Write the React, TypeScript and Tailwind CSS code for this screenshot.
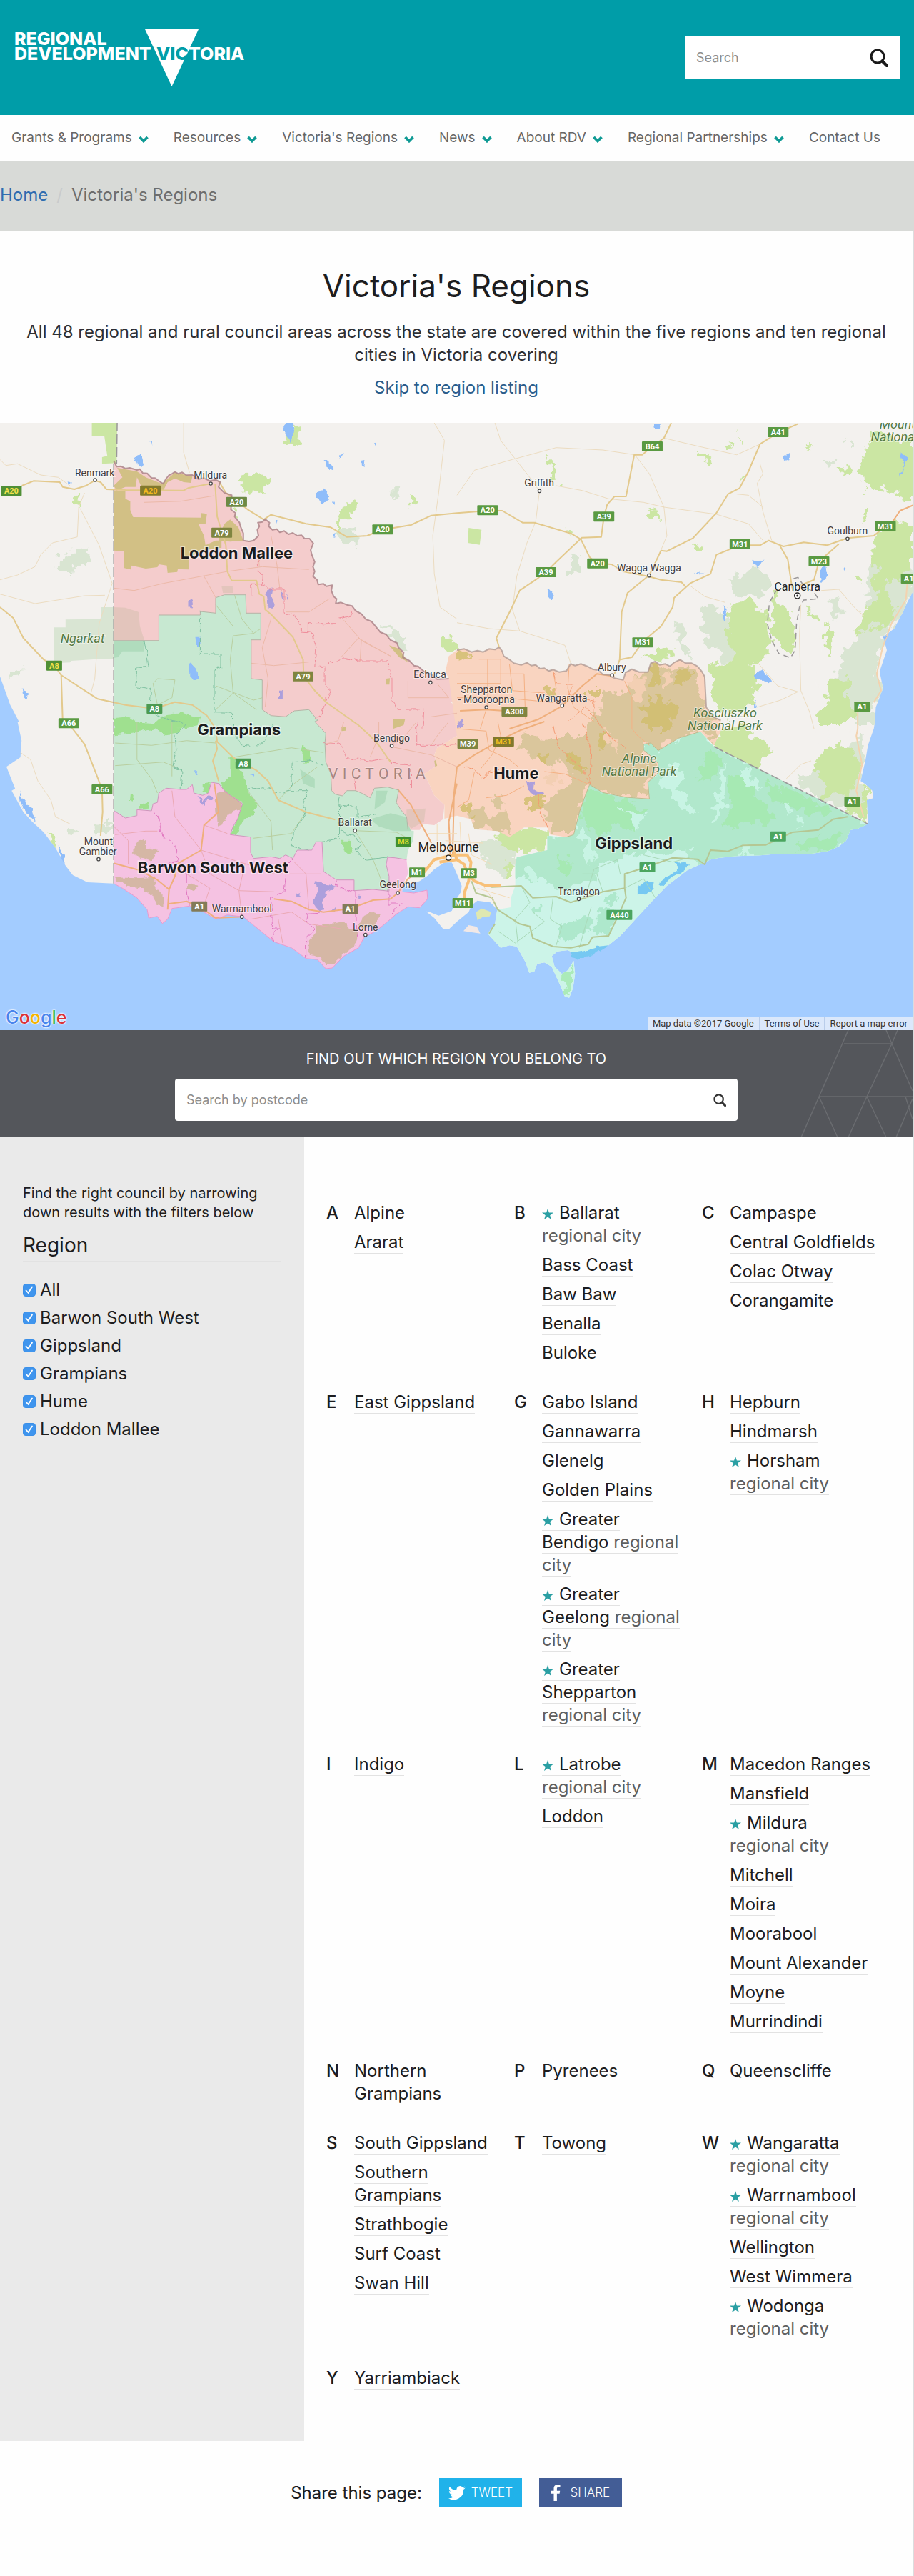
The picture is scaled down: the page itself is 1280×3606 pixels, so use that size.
import { Fragment } from "react";

/* ---------- Shared data ---------- */

const NAV = [
  { label: "Grants & Programs", menu: true },
  { label: "Resources", menu: true },
  { label: "Victoria's Regions", menu: true },
  { label: "News", menu: true },
  { label: "About RDV", menu: true },
  { label: "Regional Partnerships", menu: true },
  { label: "Contact Us", menu: false },
];

const FILTERS = ["All", "Barwon South West", "Gippsland", "Grampians", "Hume", "Loddon Mallee"];

type Council = string | { city: string };

const COUNCILS: { letter: string; items: Council[] }[] = [
  { letter: "A", items: ["Alpine", "Ararat"] },
  { letter: "B", items: [{ city: "Ballarat" }, "Bass Coast", "Baw Baw", "Benalla", "Buloke"] },
  { letter: "C", items: ["Campaspe", "Central Goldfields", "Colac Otway", "Corangamite"] },
  { letter: "E", items: ["East Gippsland"] },
  {
    letter: "G",
    items: [
      "Gabo Island",
      "Gannawarra",
      "Glenelg",
      "Golden Plains",
      { city: "Greater Bendigo" },
      { city: "Greater Geelong" },
      { city: "Greater Shepparton" },
    ],
  },
  { letter: "H", items: ["Hepburn", "Hindmarsh", { city: "Horsham" }] },
  { letter: "I", items: ["Indigo"] },
  { letter: "L", items: [{ city: "Latrobe" }, "Loddon"] },
  {
    letter: "M",
    items: [
      "Macedon Ranges",
      "Mansfield",
      { city: "Mildura" },
      "Mitchell",
      "Moira",
      "Moorabool",
      "Mount Alexander",
      "Moyne",
      "Murrindindi",
    ],
  },
  { letter: "N", items: ["Northern Grampians"] },
  { letter: "P", items: ["Pyrenees"] },
  { letter: "Q", items: ["Queenscliffe"] },
  { letter: "S", items: ["South Gippsland", "Southern Grampians", "Strathbogie", "Surf Coast", "Swan Hill"] },
  { letter: "T", items: ["Towong"] },
  {
    letter: "W",
    items: [{ city: "Wangaratta" }, { city: "Warrnambool" }, "Wellington", "West Wimmera", { city: "Wodonga" }],
  },
  { letter: "Y", items: ["Yarriambiack"] },
];

/* ---------- Icons ---------- */

function Magnifier({ className }: { className: string }) {
  return (
    <svg viewBox="0 0 26 26" className={className} fill="none" stroke="currentColor" aria-hidden="true">
      <circle cx="11" cy="11" r="9" strokeWidth="3.2" />
      <path d="M17.5 17.5 24 24" strokeWidth="4.4" strokeLinecap="round" />
    </svg>
  );
}

function Chevron() {
  return (
    <svg viewBox="0 0 14 10" className="mt-1 h-2.5 w-3.5 text-[#0f9a94]" fill="none" stroke="currentColor" aria-hidden="true">
      <path d="M1.5 2 7 7.5 12.500 2" strokeWidth="3.8" />
    </svg>
  );
}

function Star() {
  return (
    <svg viewBox="0 0 16 15" className="mr-2 inline-block h-[15px] w-4 align-[-1px] text-[#2a9fa3]" aria-hidden="true">
      <path
        fill="currentColor"
        d="M8 0 9.900 5.500 16 5.600 11.200 9.200 12.900 15 8 11.600 3.100 15 4.800 9.200 0 5.600 6.100 5.500Z"
      />
    </svg>
  );
}

function Logo() {
  return (
    <svg viewBox="0 0 340 84" className="h-[84px] w-[340px]" role="img" aria-label="Regional Development Victoria">
      <path d="M183 2H258L220.500 82Z" fill="#fff" />
      <g className="font-[Inter] text-[25px] font-extrabold" fill="#fff">
        <text x="0" y="24">REGIONAL</text>
        <text x="0" y="45">DEVELOPMENT</text>
        <text x="199" y="45">
          <tspan fill="#009da8">VIC</tspan>
          <tspan>TORIA</tspan>
        </text>
      </g>
    </svg>
  );
}

/* ---------- Map ---------- */

/* The map is traced in four tiles: [column, row, "x,y x,y ..."], in tile units. */
type Seg = [number, number, string];

const px = (col: number, x: number) => (x + col * 1568) / 2.45;
const py = (row: number, y: number) => (y + row * 1260) / 3 - 2;

function line(...segs: Seg[]) {
  const pts = segs.flatMap(([c, r, s]) =>
    s.split(" ").map((p) => {
      const [x, y] = p.split(",").map(Number);
      return `${px(c, x).toFixed(1)} ${py(r, y).toFixed(1)}`;
    }),
  );
  return "M" + pts.join("L");
}
const area = (...segs: Seg[]) => line(...segs) + "Z";

const rev = ([c, r, s]: Seg): Seg => [c, r, s.split(" ").reverse().join(" ")];

const eastCoast: Seg[] = [
  [1, 0, "1568,705 1545,760 1530,800 1500,870 1462,905 1475,960 1450,1050 1462,1120 1437,1200 1434,1260"],
  [1, 1, "1430,30 1410,100 1402,160 1385,250 1400,262 1425,290 1428,322 1406,330 1410,430"],
];
const gippsCoast: Seg = [
  1,
  1,
  "1410,430 1375,450 1350,455 1335,500 1310,525 1270,545 1200,558 1100,556 1040,562 960,565 900,572 870,580 790,625 720,690 680,740 620,820 560,900 520,940 440,965 405,975 380,960 345,965 325,985 335,1030 360,1060 380,1045 400,1005 405,1060 398,1120 385,1160 370,1155 355,1110 340,1070 325,1030 300,1012 275,1018 265,1050 248,1055 235,1010 205,945 180,940 150,950 105,890",
];
const westernPort: Seg = [1, 1, "105,890 130,850 138,790 115,760 70,752 50,772 40,800 0,840"];
const bay: Seg[] = [
  [0, 1, "1540,872 1520,870 1490,825 1462,797 1475,800 1505,815 1550,795"],
  [1, 1, "0,742 14,715 16,690 5,655"],
  [0, 1, "1550,592 1525,592 1490,620 1470,645 1440,670 1400,690 1380,700"],
];
const surfCoast: Seg = [
  0,
  1,
  "1380,715 1420,720 1465,708 1467,745 1440,782 1400,778 1360,808 1330,840 1290,880 1250,905 1230,950 1180,985 1140,1035 1118,1038 1090,1000 1050,995 1000,950 940,925 870,855 835,820 780,812 740,830 700,800 650,775 590,785 575,830 557,848 540,818 510,825 505,790 470,740 420,700 390,680",
];
const saCoast: Seg[] = [
  [0, 1, "390,680 300,675 250,645 225,605 190,530 150,465 110,420 80,380 40,290 52,282 22,190 70,150 74,80 60,0"],
  [0, 0, "65,1260 35,1190 0,1070"],
];

const murray: Seg = [
  0,
  0,
  "390,165 400,190 415,188 430,198 445,195 470,204 480,200 490,217 505,218 520,237 532,238 545,250 560,262 570,240 580,225 590,220 600,212 612,220 625,214 640,226 660,225 680,242 700,238 720,250 740,245 755,255 750,275 770,300 795,310 795,335 792,370 808,385 805,400 822,425 825,440 835,470 835,500 855,504 870,500 887,480 883,455 890,440 885,425 900,422 910,410 925,425 922,440 935,455 950,452 960,466 975,460 990,474 1005,468 1020,480 1035,478 1045,492 1062,492 1075,512 1066,540 1070,560 1080,590 1074,610 1080,630 1074,650 1088,665 1092,685 1110,682 1120,692 1140,688 1137,710 1145,735 1155,745 1152,765 1170,760 1190,770 1208,775 1220,795 1240,808 1255,830 1275,840 1290,862 1305,885 1325,895 1340,918 1362,930 1368,950 1385,970 1382,990 1405,1005 1420,1025 1435,1028 1455,1050 1480,1062 1500,1082 1540,1080",
];
const loddonHume: Seg[] = [
  [1, 0, "30,1100 30,1150 -20,1180 25,1230"],
  [0, 1, "1568,60 1500,110 1490,140 1500,185 1455,220 1470,255"],
];
const loddonSouth: Seg[] = [[0, 1, "1490,310 1525,350 1520,410 1490,435 1450,430 1440,455 1400,455"]];
const loddonGrampians: Seg[] = [
  [
    0,
    1,
    "1400,455 1395,400 1375,370 1360,340 1368,288 1330,275 1285,280 1270,320 1240,300 1220,290 1190,290 1175,312 1150,305 1138,290 1135,220 1118,170 1115,90 1118,50 1080,0",
  ],
  [
    0,
    0,
    "1090,1255 1060,1210 1010,1215 980,1240 930,1235 900,1210 900,1085 862,1080 862,917 895,917 895,805 845,805 843,728 770,728 740,740 740,805 687,798 687,813 545,813 545,920 390,920",
  ],
];
const grampiansBarwon: Seg = [
  0,
  1,
  "1395,580 1355,572 1330,570 1325,600 1335,650 1335,712 1280,705 1215,710 1215,665 1155,665 1110,630 1105,505 1085,505 1070,540 1020,540 1005,575 980,560 960,575 930,568 870,575 860,550 860,485 790,475 800,440 815,410 832,345 790,310 770,290 750,260 725,255 715,300 695,310 665,300 660,265 640,285 620,285 570,280 545,300 540,340 525,345 520,375 470,370 470,395 430,405 392,375",
];
const humeNorth: Seg = [
  1,
  0,
  "0,960 25,955 50,968 70,962 90,968 110,955 130,958 145,948 155,965 160,985 180,1000 195,1015 220,1022 240,1013 255,1025 270,1022 285,1038 300,1036 315,1048 330,1042 350,1052 375,1048 390,1018 405,1025 425,1018 450,1030 465,1040 485,1045 500,1062 525,1065 540,1078 570,1085 578,1055 600,1040 625,1052 655,1052 665,1015 680,1008 695,1022 715,1018 730,1028 745,1012 765,1000 785,1015 805,1015 825,1028 840,1050 850,1072 855,1200 880,1240 905,1255",
];
const humeGipps: Seg = [
  1,
  1,
  "835,42 760,70 690,122 665,90 640,95 640,120 665,145 690,175 690,215 655,255 660,325 580,318 500,298 455,265 440,310 420,380 400,475 375,485",
];
const humeSouth: Seg[] = [
  [1, 1, "375,485 320,475 310,445 230,445 180,485 140,460 60,452 48,410 0,395"],
  [0, 1, "1550,400 1525,408 1525,350 1490,310"],
];

const LAND = area([0, 0, "0,0 3136,0"], ...eastCoast, gippsCoast, westernPort, ...bay, surfCoast, ...saCoast);
const LODDON = area(murray, ...loddonHume, ...loddonSouth, ...loddonGrampians);
const GRAMPIANS = area(
  ...loddonGrampians,
  rev(grampiansBarwon),
  [0, 1, "1395,580 1400,540 1418,500 1420,460"],
);
const BARWON = area(rev(grampiansBarwon), [0, 1, "1395,580 1400,640 1380,690"], surfCoast);
const HUME = area(
  [0, 0, "1540,1080 1528,1050 1540,985 1568,960"],
  humeNorth,
  [1, 1, "905,40 882,100"],
  humeGipps,
  ...humeSouth,
  [0, 1, "1470,255 1455,220 1500,185 1490,140 1500,110 1568,60"],
);
const GIPPSLAND = area(
  humeGipps,
  [1, 1, "310,480 310,540 205,570 200,600 200,690 185,740 185,780 138,790 130,850 105,890"],
  rev(gippsCoast),
  [1, 1, "882,105"],
);

const PARKS_DARK = [
  area([0, 0, "198,568 240,565 242,545 300,545 300,600 250,602 245,645 212,645 198,620"]),
  area([0, 0, "1155,470 1190,450 1222,452 1225,528 1180,510"]),
  area([0, 0, "1340,280 1370,280 1368,322 1338,320"]),
  area([0, 0, "22,1050 70,1040 68,1072 26,1076"]),
  area([0, 0, "1315,835 1340,870 1385,905 1388,960 1370,950 1330,900"]),
  area([0, 1, "230,440 270,465 260,480 235,470"]),
  area([0, 1, "335,440 378,420 375,470 335,475"]),
  area([1, 0, "740,870 770,850 790,880 775,930 800,990 770,960 755,905"]),
  area([1, 0, "835,850 850,775 895,768 905,800 930,830 940,900 950,1000 910,1010 890,960 860,930"]),
  area([1, 0, "940,650 990,640 1010,600 1060,640 1080,670 1050,740 1000,730 960,740"]),
  area([1, 0, "1420,130 1480,200 1500,280 1568,330 1568,130 1500,180"]),
  area([1, 0, "1430,560 1500,560 1560,590 1568,700 1510,850 1460,900 1440,1060 1450,1130 1430,1260 1270,1260 1290,1150 1310,1040 1330,960 1370,940 1400,790"]),
  area([1, 0, "1280,760 1310,740 1320,800 1290,830"]),
  area([1, 0, "395,565 420,565 408,645 388,640"]),
  area([1, 0, "1260,160 1290,150 1300,180 1270,185"]),
  area([1, 0, "1340,80 1360,90 1350,115"]),
  area([1, 1, "1170,240 1300,140 1390,60 1395,240 1410,400 1240,330"]),
  area([1, 1, "70,520 120,480 185,520 200,580 195,655 140,640 100,600"]),
];

const NGARKAT = area([0, 0, "186,865 225,865 225,832 345,830 348,780 390,780 390,965 415,968 400,995 330,998 245,1005 240,1012 186,1015"]);

const PARKS_LIGHT = [
  area([0, 0, "980,6 1040,25 1035,85 1010,118 975,110 975,80 1000,60"]),
  area([0, 0, "808,245 840,218 880,220 920,245 918,300 870,292 835,302 832,270"]),
  area([0, 0, "255,335 270,308 282,345 270,365"]),
  area([0, 0, "1160,405 1200,335 1235,345 1210,370 1200,400 1170,420 1175,460 1158,470"]),
  area([0, 0, "1405,312 1425,318 1420,358 1403,350"]),
  area([0, 0, "1525,895 1568,935 1568,955 1540,985 1520,950"]),
  area([0, 0, "800,360 822,400 805,395"]),
  area([0, 1, "150,465 180,480 205,530 190,530"]),
  area([1, 0, "316,155 330,165 335,215 355,258 340,262 322,225"]),
  area([1, 0, "832,122 870,165 860,175 838,160"]),
  area([1, 0, "975,40 972,95 967,85"]),
  area([1, 0, "662,390 676,360 680,385 686,402 664,402"]),
  area([1, 0, "812,510 830,503 828,532 812,530"]),
  area([1, 0, "376,445 405,470 400,480 382,468"]),
  area([1, 0, "986,232 1000,240 985,262 978,250"]),
  area([1, 0, "935,95 952,88 948,118 935,112"]),
  area([1, 0, "1185,105 1200,95 1200,120"]),
  area([1, 0, "1308,205 1340,185 1356,210 1330,242"]),
  area([1, 0, "1425,40 1420,80 1390,160 1375,200 1395,250 1385,310 1430,270 1470,290 1568,330 1568,60 1500,80 1450,40"]),
  area([1, 0, "1385,370 1410,365 1400,410 1380,425"]),
  area([1, 0, "1440,470 1510,420 1568,440 1568,590 1520,690 1480,650 1450,740 1430,700 1440,600 1412,580 1430,540"]),
  area([1, 0, "1395,790 1470,700 1510,780 1490,860 1420,860 1370,910"]),
  area([1, 0, "635,985 670,965 735,952 745,985 700,1000 650,1000"]),
  area([1, 0, "930,770 990,750 1060,790 1070,900 1070,980 1020,1010 1030,1100 1010,1200 940,1240 870,1180 880,1080 870,1030 950,1000 935,900"]),
  area([1, 0, "1080,730 1100,720 1130,790 1150,840 1165,900 1150,980 1110,970 1075,870"]),
  area([1, 0, "1200,770 1220,800 1250,830 1225,850 1205,830"]),
  area([1, 0, "1198,860 1235,880 1220,925 1195,910"]),
  area([1, 0, "1365,655 1390,660 1385,680 1365,675"]),
  area([1, 0, "1290,1090 1340,1080 1340,1180 1370,1260 1240,1260 1270,1140"]),
  area([1, 0, "1270,840 1290,900 1285,1000 1265,960"]),
  area([1, 1, "905,40 980,10 1020,70 1080,110 1050,160 1040,205 890,120 885,80"]),
  area([1, 1, "1220,200 1250,120 1300,90 1370,130 1390,200 1340,300 1260,320 1250,240"]),
  area([1, 1, "1400,280 1418,300 1405,410 1330,375 1390,330"]),
  area([1, 1, "140,465 230,450 310,448 310,545 240,545 150,530"]),
  area([1, 1, "180,590 200,600 195,655 165,650"]),
];
const SQUARE_PARKS = [
  area([0, 0, "315,6 402,6 400,175 350,178 350,150 368,145 358,62 315,62"]),
  area([1, 0, "40,447 84,455 78,518 37,510"]),
];

const HOLES = [
  area([1, 0, "1060,1040 1130,1010 1170,900 1190,760 1240,860 1255,960 1230,1080 1250,1170 1225,1260 1060,1260 1040,1150"]),
  area([1, 1, "1075,0 1225,0 1250,60 1255,130 1215,150 1225,230 1160,240 1090,190 1050,160 1080,110"]),
  area([1, 1, "1270,50 1310,30 1370,40 1350,100 1305,110"]),
  area([1, 0, "1390,240 1440,290 1480,320 1440,370 1400,330"]),
];

const MALLEE_PARKS = [
  area([0, 0, "390,290 430,292 430,325 447,335 447,372 457,402 690,404 690,385 710,388 705,430 680,430 700,480 705,520 740,500 760,500 760,530 700,540 648,570 648,622 610,620 608,632 575,636 572,605 545,600 540,612 500,618 450,605 448,622 424,615 424,545 390,542"]),
  area([0, 0, "402,195 470,210 500,235 555,262 600,215 660,232 655,258 630,255 600,240 575,255 560,290 490,290 480,260 470,235 465,275 430,275 400,290 390,270 420,235"]),
  area([0, 0, "770,430 790,412 818,445 835,500 790,505 750,500 755,470"]),
  area([0, 0, "1335,940 1370,955 1400,1010 1370,990"]),
  area([0, 0, "1350,1250 1390,1250 1385,1275 1350,1290"]),
  area([0, 0, "1325,1080 1338,1078 1336,1105 1325,1105"]),
  area([0, 1, "1490,165 1520,145 1568,140 1568,200 1530,218 1495,205"]),
  area([0, 1, "1170,25 1188,20 1186,38 1172,40"]),
];

const HIGH_COUNTRY = [
  area([1, 0, "670,1020 720,1040 800,1030 825,1080 845,1200 890,1250"], [1, 1, "880,90 835,42 760,70 690,120 650,90 640,125 685,190 650,255 652,318 500,292 452,270 400,465 330,465 310,420 290,350 330,300 400,250 370,190 340,120 280,100 330,60 440,60 450,0"], [1, 0, "500,1200 500,1120 560,1150 600,1090 640,1060"]),
  area([1, 1, "45,350 90,370 110,400 170,390 190,445 180,475 60,445 45,410"]),
  area([1, 1, "120,300 160,320 150,370 125,350"]),
  area([1, 1, "230,60 300,80 370,130 340,190 260,150 210,110"]),
];
const HIGH_GAPS = [
  area([1, 0, "585,1090 640,1075 660,1130 620,1180 600,1150"]),
  area([1, 0, "710,1060 740,1050 735,1100 700,1140"]),
  area([1, 1, "500,30 530,50 560,120 540,110 510,80"]),
  area([1, 1, "335,190 360,240 330,270 300,250"]),
];

const HIGH_OLIVE = [
  area([1, 0, "665,1030 690,1020 705,1050 690,1100 670,1110"]),
  area([1, 0, "760,1050 800,1050 780,1100 740,1110"]),
  area([1, 0, "440,1125 490,1125 490,1145 445,1145"]),
  area([1, 0, "310,1120 335,1120 330,1150 310,1145"]),
  area([1, 0, "0,970 40,972 60,980 0,1010"]),
  area([1, 0, "630,1200 690,1150 760,1200 730,1290 650,1290"]),
  area([1, 1, "470,50 500,40 520,90 500,120 475,100"]),
  area([1, 1, "370,120 430,160 440,220 380,180"]),
  area([1, 1, "250,320 285,300 300,350 260,390 240,350"]),
  area([1, 1, "280,140 300,135 305,165 285,165"]),
  area([1, 1, "20,340 55,350 50,400 30,390"]),
];

const GIPPS_FOREST = area(
  [1, 1, "455,265 500,298 660,325 655,255 690,215 690,175 640,120 640,95 665,90 690,122 760,70 835,42 882,105 1410,430 1350,455 1335,500 1270,545 1200,558 1040,562 960,565 880,575 840,600 830,570 800,530 720,545 640,545 560,560 480,600 455,660 400,690 330,685 290,640 250,665 200,645 205,570 310,540 310,480 375,485 400,475"],
);
const GIPPS_GREEN = [
  area([1, 1, "460,280 520,310 600,340 640,380 600,420 620,460 540,440 500,470 440,440 425,400"]),
  area([1, 1, "860,120 895,140 900,200 860,250 820,240"]),
  area([1, 1, "940,220 1020,260 1040,340 1100,400 1060,430 1000,420 940,460 920,430 930,330"]),
  area([1, 1, "1060,250 1180,310 1300,380 1260,400 1190,380 1080,330"]),
  area([1, 1, "1150,520 1200,500 1320,470 1325,495 1270,535 1170,545"]),
  area([1, 1, "350,580 385,570 380,640 345,630"]),
  area([1, 1, "360,1070 395,1025 398,1110 382,1145 372,1140"]),
];
const GIPPS_VALLEYS = [
  area([1, 1, "690,240 720,200 760,190 780,240 760,290 800,330 825,395 800,395 760,350 730,300 700,270"]),
  area([1, 1, "915,180 930,220 920,290 910,360 890,440 875,440 890,340 905,260"]),
  area([1, 1, "970,200 1000,210 1050,290 1010,260 970,240"]),
  area([1, 1, "560,365 620,390 640,400 620,450 600,420"]),
  area([1, 1, "1130,350 1150,360 1130,400"]),
  area([1, 1, "1170,410 1185,420 1170,460"]),
  area([1, 1, "970,530 1010,525 1005,550 970,550"]),
  area([1, 1, "415,430 440,470 470,540 460,600 430,500"]),
  area([1, 1, "235,610 270,615 270,670 230,660"]),
];
const GIPPS_WOODS = [
  area([1, 1, "510,740 540,728 552,755 520,768"]),
  area([1, 1, "490,780 545,785 545,860 500,890 470,880"]),
  area([1, 1, "355,850 400,830 470,820 460,870 410,900 360,925 345,900"]),
  area([1, 1, "255,770 290,765 290,800 260,805"]),
];

const GRAMPIANS_PARKS = [
  area([0, 0, "390,1245 440,1240 480,1265 530,1270 560,1235 620,1225 690,1245 680,1275 640,1285 390,1290"]),
  area([0, 1, "392,0 620,15 620,45 570,55 530,30 470,45 392,55"]),
  area([0, 1, "790,150 810,150 815,190 835,220 850,290 880,345 870,390 830,420 810,475 792,470 835,345 760,290 765,255 790,230"]),
  area([0, 1, "695,260 722,255 715,300 695,300"]),
  area([0, 1, "1040,95 1060,120 1070,165 1045,180 1035,130"]),
  area([0, 1, "1170,500 1200,500 1210,550 1185,555"]),
  area([0, 1, "448,305 460,310 458,335 446,330"]),
  area([0, 1, "478,350 512,335 510,365 478,368"]),
];
const GRAMPIANS_GREY = [
  area([0, 0, "392,920 495,920 495,965 420,965 405,990 392,992"]),
  area([0, 1, "1270,410 1340,385 1390,400 1410,460 1350,460 1300,440"]),
  area([0, 1, "1030,200 1080,240 1080,280 1040,260"]),
  area([0, 1, "1290,290 1330,290 1320,340 1285,370"]),
];
const MALLEE_GREY = [
  area([0, 0, "390,780 430,782 475,800 480,860 495,918 390,918"]),
  area([0, 0, "760,690 798,690 800,720 765,720"]),
  area([0, 1, "1395,370 1460,365 1455,420 1410,450 1395,420"]),
];
const BARWON_PARKS = [
  area([0, 1, "395,652 470,655 530,650 530,690 560,730 560,780 540,770 520,730 490,700 440,690 400,670"]),
  area([0, 1, "745,300 770,290 832,345 825,370 790,380 765,430 745,440 740,360"]),
  area([0, 1, "650,680 680,690 660,715 642,705"]),
  area([0, 1, "470,510 500,490 500,530 545,540 520,585 480,570 455,550"]),
  area([0, 1, "1085,855 1130,850 1180,840 1200,870 1235,880 1215,950 1180,975 1140,1020 1120,1020 1100,990 1060,980 1060,920 1085,880"]),
  area([0, 1, "1245,820 1280,800 1305,810 1285,865 1230,860"]),
];

const LAKES = [
  area([0, 0, "968,30 985,6 1008,6 1005,60 998,88 985,65"]),
  area([0, 0, "462,150 480,142 495,165 490,195 475,190"]),
  area([0, 0, "1085,298 1115,283 1125,310 1132,325 1110,345 1085,320"]),
  area([0, 0, "1113,155 1135,180 1145,205 1120,185"]),
  area([0, 0, "1240,165 1253,162 1250,188 1242,185"]),
  area([0, 0, "1160,140 1178,132 1165,155"]),
  area([0, 0, "1286,88 1294,92 1290,102"]),
  area([0, 0, "1142,330 1148,345 1140,345"]),
  area([0, 0, "1142,475 1155,472 1152,488 1143,486"]),
  area([0, 0, "946,410 952,412 950,430"]),
  area([0, 0, "515,80 522,82 520,98"]),
  area([0, 0, "236,252 244,256 242,275"]),
  area([0, 0, "648,1010 675,1045 678,1080 665,1088 650,1065"]),
  area([0, 0, "670,905 690,905 690,940 675,948"]),
  area([0, 0, "78,1122 95,1145 92,1168 82,1155"]),
  area([0, 1, "65,292 75,320 110,370 122,420 95,390 70,340"]),
  area([0, 1, "200,520 222,560 222,595 205,560"]),
  area([0, 1, "667,205 679,205 677,222 668,222"]),
  area([0, 1, "855,222 872,215 870,230"]),
  area([0, 1, "930,522 940,526 932,538"]),
  area([1, 0, "675,6 698,6 695,35 680,35"]),
  area([1, 0, "1243,622 1265,610 1270,650 1250,678"]),
  area([1, 0, "1325,615 1334,612 1332,628"]),
  area([1, 0, "310,700 332,730 330,745 315,742"]),
  area([1, 0, "1022,1065 1050,1040 1078,1090 1070,1102 1045,1085 1025,1085"]),
  area([1, 0, "1120,145 1140,132 1138,158 1122,165"]),
  area([1, 0, "1522,130 1545,150 1530,215 1518,230 1535,180"]),
  area([1, 0, "1015,580 1035,590 1050,580 1030,612"]),
  area([1, 0, "808,632 830,640 845,634 825,645"]),
  area([1, 0, "915,775 925,790 918,840 912,820"]),
  area([1, 0, "1455,898 1480,902 1470,912"]),
  area([1, 0, "1022,1170 1030,1195 1022,1205"]),
];
const PURPLE_LAKES = [
  area([0, 0, "912,712 935,700 930,735 945,770 940,785 920,785 915,750"]),
  area([0, 0, "648,750 658,745 662,770 655,785 648,775"]),
  area([0, 0, "958,1130 970,1130 970,1165 958,1165"]),
  area([0, 0, "962,712 975,725 972,750"]),
  area([0, 0, "983,722 992,750 985,748"]),
  area([0, 1, "1080,670 1120,685 1155,695 1120,715 1105,760 1110,790 1095,795 1072,760 1080,730 1095,715"]),
  area([0, 1, "1017,722 1028,722 1028,735 1017,738"]),
  area([0, 1, "1228,725 1238,725 1236,740 1228,738"]),
  area([0, 1, "1135,798 1150,775 1152,798"]),
  area([0, 1, "680,312 690,318 697,340 712,310 730,318 732,335 712,325 700,350 690,345"]),
  area([1, 0, "0,1270 20,1250 22,1285 0,1290"]),
  area([1, 1, "235,245 265,255 262,285 300,300 290,310 262,310 240,280"]),
];
const GIPPS_LAKES = [
  area([1, 1, "622,690 650,672 675,675 672,700 645,730 622,725"]),
  area([1, 1, "690,680 720,655 760,615 745,590 780,588 798,600 780,622 740,655 700,690"]),
  area([1, 1, "390,970 440,960 480,945 520,940 470,975 420,1000 395,990"]),
];

const MAJOR = [
  line([0, 0, "75,270 115,250 205,255 215,275 255,285 295,270 325,248 345,255 365,285 430,288 630,290 645,280 720,262"]),
  line([0, 0, "738,262 745,400 760,460 775,520 780,630 795,668 880,668 890,725 905,735 910,790 930,810 1005,905 1040,1000 1042,1070 1080,1130 1120,1180 1230,1275"], [0, 1, "1270,60 1300,100 1340,170"]),
  line([0, 0, "750,250 775,300 850,370 905,412 930,392 1050,430 1135,445 1190,485 1260,480 1310,455 1410,435 1480,395 1568,385"], [1, 0, "0,385 105,375 155,375 225,425 265,425 390,470 425,495 455,570 480,596 530,600 570,630 655,650 700,665 770,675 785,695"]),
  line([0, 0, "0,780 45,825 80,910 150,1000 186,1025 210,1065 335,1165 430,1190 530,1206 600,1178 660,1190 710,1235 740,1290"], [0, 1, "745,85 800,150 880,205 920,250 955,330 1050,380 1150,412"]),
  line([0, 0, "210,1065 215,1260"], [0, 1, "230,0 290,95 330,220 350,285 352,380 345,480"]),
  line([1, 0, "735,6 710,70 670,105 635,140 608,140 580,315 540,315 515,350 504,400 495,485 428,488 340,590 305,633 270,665 215,710 185,790 135,910 145,950"]),
  line([1, 0, "1170,10 1105,45 1040,95 1000,210 970,280 930,305 890,385 810,490 720,545 700,542 660,645"]),
  line([1, 0, "655,650 585,720 565,800 558,1000 540,1060"]),
  line([1, 0, "1470,440 1430,480 1340,490 1270,520 1190,508 1120,525 1070,500 1040,520 970,520 890,560 870,640 800,680 745,740 740,780 700,860 637,925 600,990 560,1000"]),
  line([1, 0, "1310,515 1242,588 1225,665 1175,690"]),
  line([1, 0, "1105,515 1135,580 1150,700"]),
  line([0, 1, "740,80 745,115 730,165 750,250"]),
];
const MAJOR_EAST = [
  line([1, 1, "0,190 60,140 160,70 220,35 300,0"]),
  line([0, 1, "1365,285 1410,350 1480,510"]),
  line([0, 1, "1568,260 1555,330 1540,420 1545,560"]),
  line([1, 0, "540,1070 480,1060 430,1110 360,1195 280,1250 180,1290"]),
  line([1, 0, "10,1215 100,1210 200,1218"]),
  line([1, 0, "1568,350 1520,375 1495,420"]),
  line([1, 1, "0,190 -10,300 -15,560"]),
  line([0, 1, "390,595 480,625 540,665 580,705 600,650 605,600 690,540 700,435 750,380 735,260"]),
  line([0, 1, "580,705 575,790"]),
  line([0, 1, "940,745 1000,755 1060,790 1110,800 1200,786 1280,750 1340,745 1365,720 1400,660 1480,600"]),
  line([0, 1, "580,765 640,755 684,776 740,825 830,820"]),
];
const COAST_ROAD = [
  line([1, 0, "1545,680 1540,750 1490,850 1460,950 1440,1060 1455,1130 1430,1180"]),
  line([1, 0, "1375,1220 1375,1290"], [1, 1, "1370,60 1390,180 1370,290 1395,400"]),
];
const MAJOR_GIPPS = [
  line([1, 1, "60,670 120,695 220,690 260,740 340,735 390,760 440,740 500,715 575,700 575,640 640,615 740,572 825,578 850,600 870,540 930,545 980,520 1060,518 1150,465 1240,455 1290,410 1340,400"]),
  line([1, 1, "575,700 580,740 555,810 520,900 465,905 450,935 390,950 330,945 260,910 250,860 215,850 140,790 120,740 65,720 50,670"]),
  line([1, 1, "130,850 110,890"]),
];
const MINOR = [
  line([0, 0, "0,160 20,185 60,178 140,225 200,235 240,270"]),
  line([0, 0, "0,665 60,645 120,610 140,560 180,510 265,485 270,360 290,300"]),
  line([0, 0, "275,365 340,520 385,680 340,850 330,1000 325,1080 310,1150"]),
  line([0, 0, "0,725 120,765 290,732 360,730"]),
  line([0, 0, "630,6 630,130 650,215"]),
  line([0, 0, "1490,6 1525,80 1505,300 1485,480 1490,640 1510,780 1568,830"]),
  line([0, 0, "390,700 460,710 560,680 780,630 900,610 1060,622"]),
  line([0, 0, "495,340 620,335 735,312"]),
  line([0, 1, "70,130 105,160 130,250 175,330 190,400 240,430"]),
  line([1, 0, "130,6 150,80 240,220 283,292 270,420 240,510 205,650 190,790 215,880 370,940 390,1015"]),
  line([1, 0, "0,310 60,205 190,160 340,110 500,120 610,140 660,220 710,360 720,480 700,540"]),
  line([1, 0, "340,270 430,290 520,325 640,340 710,360 890,390 1000,430 1050,500"]),
  line([1, 0, "710,70 830,105 960,140 1040,95 1040,180 1050,220 1030,260 1050,380 1080,500"]),
  line([1, 0, "0,845 110,870 215,880"]),
  line([1, 0, "960,305 1000,310 1050,360"]),
  line([1, 0, "800,690 850,735 920,760"]),
  line([1, 0, "1180,770 1175,900 1180,1130 1210,1220 1225,1290"]),
  line([1, 0, "1030,1010 1100,1110 1170,1135 1110,1170 1030,1200"]),
  line([1, 0, "1250,710 1310,705 1370,790 1400,820"]),
  line([1, 1, "1130,240 1180,180 1215,165"]),
];
const PINK_ROADS = [
  line([0, 0, "390,700 460,710 560,680 780,630 900,610 1060,622"]),
  line([0, 0, "495,340 620,335 735,312"]),
  line([0, 0, "885,540 890,610"]),
  line([0, 0, "930,480 950,600 960,700"]),
  line([0, 0, "700,650 740,740"]),
  line([0, 0, "980,800 1060,800 1130,745"]),
  line([0, 0, "1180,835 1240,920 1340,985 1230,910 1170,990"]),
  line([0, 0, "1060,1010 940,1025 862,1015"]),
  line([0, 0, "930,830 900,950 920,1080 910,1200"]),
  line([0, 0, "1240,920 1235,1010"]),
  line([0, 0, "1400,1090 1400,1160 1540,1160 1500,1100"]),
  line([0, 0, "1480,1240 1568,1225"]),
  line([0, 1, "1340,100 1390,60 1430,0"]),
  line([0, 1, "1270,150 1300,60 1300,0"]),
  line([0, 1, "1340,105 1480,140 1568,190"]),
  line([0, 1, "1180,0 1160,80 1115,95"]),
  line([0, 1, "1540,0 1500,60 1480,100"]),
];
const ORANGE_ROADS = [
  line([1, 0, "75,998 150,998 150,1100 0,1100"]),
  line([1, 0, "105,1000 105,1190 80,1290"]),
  line([1, 0, "180,1020 190,1130 300,1140 360,1190"]),
  line([1, 0, "0,1060 230,1060 235,1250"]),
  line([1, 0, "0,1160 160,1160 330,1180"]),
  line([1, 0, "330,1050 340,1120 320,1170"]),
  line([1, 0, "385,1020 380,1120 400,1200 470,1260"]),
  line([1, 0, "575,1090 600,1160 600,1290"], [1, 1, "620,60 660,100"]),
  line([1, 1, "0,30 100,40 110,120 180,160 210,190"]),
  line([1, 1, "60,210 40,330 0,360"]),
  line([1, 1, "300,210 370,220 455,265"]),
  line([1, 1, "140,0 150,60 120,140 80,200"]),
  line([1, 1, "100,320 170,310 230,270"]),
];
const GREEN_ROADS = [
  line([0, 0, "525,1100 540,1080 600,1085 590,1160 540,1190 525,1100"]),
  line([0, 0, "800,900 870,890 895,870"]),
  line([0, 0, "740,770 800,860 800,900 790,1000 800,1140 740,1210"]),
  line([0, 0, "740,1110 870,1170 900,1160"]),
  line([0, 0, "800,1140 880,1210"]),
  line([0, 0, "805,730 830,830 870,890"]),
  line([0, 1, "395,90 520,100 640,80 740,90"]),
  line([0, 1, "470,0 470,160 520,240 540,300"]),
  line([0, 1, "590,0 590,230"]),
  line([0, 1, "800,150 1000,110 1110,130"]),
  line([0, 1, "850,290 930,420 935,540"]),
  line([0, 1, "955,330 1010,260 1090,190"]),
  line([0, 1, "1050,380 1000,470 870,490"]),
  line([0, 1, "1218,458 1280,580 1310,670"]),
  line([0, 1, "1218,458 1360,465 1400,490"]),
  line([0, 1, "395,185 560,170 600,190"]),
];
const MAGENTA_ROADS = [
  line([0, 1, "395,475 500,460 540,460"]),
  line([0, 1, "590,290 600,400 690,540"]),
  line([0, 1, "690,540 850,600 940,640 1100,640"]),
  line([0, 1, "690,540 720,640 820,710 940,715"]),
  line([0, 1, "830,820 820,710 840,600"]),
  line([0, 1, "640,640 720,700 700,770"]),
  line([0, 1, "1010,590 1050,640 1060,790"]),
  line([0, 1, "700,435 780,470"]),
  line([0, 1, "860,830 1000,800 1060,850 1170,870"]),
  line([0, 1, "390,440 440,500 440,600"]),
  line([0, 1, "955,830 970,930"]),
];
const AQUA_ROADS = [
  line([1, 1, "440,740 470,620 550,580 560,640"]),
  line([1, 1, "220,690 250,760 200,830 210,940"]),
  line([1, 1, "330,735 320,830 360,860 340,940"]),
  line([1, 1, "500,715 480,640 430,640"]),
  line([1, 1, "640,560 740,590 800,570"]),
  line([1, 1, "575,700 640,660 680,740"]),
  line([1, 1, "140,880 200,930 300,840 260,800"]),
  line([1, 1, "460,780 440,860 420,950"]),
];

const LODDON_LGA = [
  line([0, 0, "888,580 888,630 902,650 900,685 862,685 862,728"]),
  line([0, 0, "900,685 925,705 975,705 975,808 1010,812 1030,850 1030,882 1070,885 1085,950 1080,1030 1115,1030 1115,1110 1135,1130 1115,1180 1100,1240 1085,1250"]),
  line([0, 0, "1057,882 1057,848 1160,848 1160,830 1205,815 1210,795"]),
  line([0, 0, "1115,1020 1185,995 1230,1005 1330,1005 1345,1080 1345,1170 1365,1210 1455,1208 1450,1290"]),
  line([0, 1, "1110,95 1165,90 1190,155 1270,165 1330,155 1345,175 1410,180 1410,290"]),
  line([0, 1, "1430,0 1430,100 1500,100 1568,95"]),
  line([0, 1, "1215,240 1220,290"]),
];
const GRAMPIANS_LGA = [
  line([0, 0, "495,920 510,1030 470,1035 465,1115 518,1125 515,1200 540,1240"], [0, 1, "640,10 600,60 605,120 590,190 625,200 620,285"]),
  line([0, 0, "687,798 687,975 757,975 757,1030 735,1040 735,1220 800,1222 800,1290"]),
  line([0, 1, "800,40 830,100 890,105 940,10"]),
  line([0, 1, "850,285 905,275 960,300 1000,290 1005,170 1060,165 1110,180"]),
  line([0, 1, "1000,290 1055,290 1040,350 1050,380 1005,470 1000,525 1060,540"]),
  line([0, 1, "1165,310 1160,350 1225,360 1225,400 1290,390"]),
  line([0, 1, "1165,350 1165,490 1105,505"]),
  line([0, 1, "1165,460 1215,480 1240,520 1220,540 1250,580 1330,570"]),
];
const BARWON_LGA = [
  line([0, 1, "525,375 545,400 555,480 605,520 610,590 580,595"]),
  line([0, 1, "640,600 640,700 650,770"]),
  line([0, 1, "1005,575 985,600 975,715 930,740 935,870 960,870 935,900 940,925"]),
  line([0, 1, "1155,665 1150,690 1220,715 1220,840 1230,910"]),
  line([0, 1, "1110,800 1055,805 1050,840 1080,870 1050,910 1050,990"]),
  line([0, 1, "1335,712 1335,765 1380,765 1340,810"]),
];
const HUME_LGA = [
  line([1, 0, "330,1050 340,1100 400,1105 380,1150 470,1170 470,1240 500,1290"], [1, 1, "540,80 580,110"]),
  line([1, 0, "380,1260 440,1200 470,1240"]),
  line([1, 1, "330,20 345,100 375,140 430,200 455,265"]),
  line([1, 1, "20,190 60,200 90,240 100,220 150,200"]),
  line([1, 1, "275,310 290,400 310,445"]),
  line([1, 1, "430,0 460,120 455,265"]),
];

const REGION_NAMES = [
  ["Loddon Mallee", 812, 577, 0, 0],
  ["Grampians", 820, 57, 0, 1],
  ["Barwon South West", 731, 635, 0, 1],
  ["Hume", 203, 239, 1, 1],
  ["Gippsland", 607, 533, 1, 1],
] as const;

type Town = [string, number, number, number, number];
const TOWN_NAMES: Town[] = [
  ["Renmark", 0, 0, 325, 232],
  ["Mildura", 0, 0, 722, 241],
  ["Echuca", 0, 0, 1475, 1077],
  ["Griffith", 1, 0, 282, 274],
  ["Wagga Wagga", 1, 0, 659, 630],
  ["Goulburn", 1, 0, 1340, 475],
  ["Albury", 1, 0, 531, 1046],
  ["Shepparton", 1, 0, 101, 1141],
  ["- Mooroopna", 1, 0, 101, 1183],
  ["Wangaratta", 1, 0, 359, 1177],
  ["Bendigo", 0, 1, 1344, 84],
  ["Ballarat", 0, 1, 1218, 438],
  ["Mount", 0, 1, 338, 518],
  ["Gambier", 0, 1, 336, 562],
  ["Warrnambool", 0, 1, 830, 800],
  ["Geelong", 0, 1, 1365, 700],
  ["Lorne", 0, 1, 1254, 880],
  ["Traralgon", 1, 1, 418, 728],
];
const DOTS: [number, number, number, number][] = [
  [0, 0, 326, 246],
  [0, 0, 723, 261],
  [0, 0, 1477, 1096],
  [1, 0, 283, 292],
  [1, 0, 659, 647],
  [1, 0, 1340, 493],
  [1, 0, 532, 1066],
  [1, 0, 101, 1200],
  [1, 0, 361, 1193],
  [0, 1, 1344, 102],
  [0, 1, 1218, 458],
  [0, 1, 338, 578],
  [0, 1, 830, 820],
  [0, 1, 1365, 720],
  [0, 1, 1254, 896],
  [1, 1, 418, 745],
];

const GREEN = "#5a9a42";
const OLIVE = "#7f8540";
const SHIELDS: [string, number, number, number, number, string, string][] = [
  ["A20", 0, 0, 39, 292, "#4f8f35", "#f5e04a"],
  ["A20", 0, 0, 516, 290, "#82792c", "#efb920"],
  ["A20", 0, 0, 812, 338, "#6c8a44", "#fff"],
  ["A20", 0, 0, 1313, 454, GREEN, "#fff"],
  ["A79", 0, 0, 761, 467, OLIVE, "#fff"],
  ["A79", 0, 0, 1040, 1070, OLIVE, "#fff"],
  ["A8", 0, 0, 186, 1025, "#4f8f35", "#f5e04a"],
  ["A8", 0, 0, 530, 1206, "#4b9a51", "#fff"],
  ["A66", 0, 0, 236, 1267, GREEN, "#fff"],
  ["A41", 1, 0, 1102, 45, GREEN, "#fff"],
  ["B64", 1, 0, 670, 105, GREEN, "#fff"],
  ["A20", 1, 0, 105, 373, GREEN, "#fff"],
  ["A39", 1, 0, 504, 400, GREEN, "#fff"],
  ["M31", 1, 0, 971, 515, GREEN, "#fff"],
  ["M31", 1, 0, 1470, 440, GREEN, "#fff"],
  ["M23", 1, 0, 1242, 588, GREEN, "#fff"],
  ["A20", 1, 0, 482, 596, GREEN, "#fff"],
  ["A39", 1, 0, 305, 633, GREEN, "#fff"],
  ["M31", 1, 0, 637, 928, GREEN, "#fff"],
  ["A1", 1, 0, 1550, 660, GREEN, "#fff"],
  ["A1", 1, 0, 1390, 1198, GREEN, "#fff"],
  ["A300", 1, 0, 197, 1218, OLIVE, "#fff"],
  ["A8", 0, 1, 835, 176, "#4b9a51", "#fff"],
  ["A66", 0, 1, 350, 285, GREEN, "#fff"],
  ["M8", 0, 1, 1384, 505, "#3f8f30", "#d8dc30"],
  ["M1", 0, 1, 1431, 634, GREEN, "#fff"],
  ["A1", 0, 1, 684, 776, "#837b58", "#fff"],
  ["A1", 0, 1, 1202, 786, "#837b58", "#fff"],
  ["M39", 1, 1, 37, 93, OLIVE, "#fff"],
  ["M31", 1, 1, 160, 84, "#82792c", "#efc020"],
  ["A1", 1, 1, 1356, 336, GREEN, "#fff"],
  ["A1", 1, 1, 1102, 482, "#4ba55f", "#fff"],
  ["A1", 1, 1, 653, 612, "#4ba55f", "#fff"],
  ["M3", 1, 1, 41, 637, GREEN, "#fff"],
  ["M11", 1, 1, 20, 762, GREEN, "#fff"],
  ["A440", 1, 1, 557, 812, "#4ba55f", "#fff"],
];

function Fill({ shapes, color, opacity = 1 }: { shapes: string[]; color: string; opacity?: number }) {
  return <path d={shapes.join("")} fill={color} fillOpacity={opacity} />;
}

function Stroke({ shapes, color, width = 1, opacity = 1 }: { shapes: string[]; color: string; width?: number; opacity?: number }) {
  return (
    <path
      d={shapes.join("")}
      fill="none"
      stroke={color}
      strokeWidth={width}
      strokeOpacity={opacity}
      strokeLinejoin="round"
    />
  );
}

function RegionMap() {
  return (
    <svg viewBox="0 0 1278 850" className="block w-full" role="img" aria-label="Map of Victoria's regions">
      <defs>
        {/* Roughens park and forest edges */}
        <filter id="ragged" x="0" y="0" width="1278" height="850" filterUnits="userSpaceOnUse">
          <feTurbulence type="fractalNoise" baseFrequency="0.07" numOctaves="3" seed="4" />
          <feDisplacementMap in="SourceGraphic" scale="26" xChannelSelector="R" yChannelSelector="G" />
        </filter>
        <filter id="ragged-fine" x="0" y="0" width="1278" height="850" filterUnits="userSpaceOnUse">
          <feTurbulence type="fractalNoise" baseFrequency="0.12" numOctaves="2" seed="9" />
          <feDisplacementMap in="SourceGraphic" scale="7" xChannelSelector="R" yChannelSelector="G" />
        </filter>
        <clipPath id="land">
          <path d={LAND} />
        </clipPath>
        <clipPath id="hume">
          <path d={HUME} />
        </clipPath>
        <clipPath id="gippsland">
          <path d={GIPPSLAND} />
        </clipPath>
      </defs>

      <rect width="1278" height="850" fill="#a3ccff" />
      <Fill shapes={[LAND]} color="#f3f1ee" />
      <g clipPath="url(#land)">
        <Fill shapes={[NGARKAT]} color="#d9e5d3" />
        <Fill shapes={SQUARE_PARKS} color="#cbe6a3" />
        <g filter="url(#ragged)">
          <Fill shapes={PARKS_DARK} color="#d6e3cf" opacity={0.9} />
          <Fill shapes={PARKS_LIGHT} color="#cbe6a3" />
          <Fill shapes={HOLES} color="#f3f1ee" />
        </g>
      </g>
      <Stroke shapes={MINOR} color="#ecdcc0" />
      <Stroke shapes={COAST_ROAD} color="#f3d3b0" width={2} />

      {/* Islands in Western Port */}
      <path d={area([1, 1, "65,800 85,785 118,800 112,818 90,820 70,835"])} fill="#dfe8b0" />
      <path d={area([1, 1, "22,880 40,855 68,862 80,890 50,885"])} fill="#f1e8e6" />

      <Fill shapes={[LODDON]} color="#f4cccc" />
      <Fill shapes={MALLEE_GREY} color="#dfc3b8" opacity={0.8} />
      <Fill shapes={MALLEE_PARKS} color="#d2c085" />
      <Fill shapes={[GRAMPIANS]} color="#c7e8d1" />
      <Fill shapes={GRAMPIANS_GREY} color="#b0dcbd" />
      <g filter="url(#ragged-fine)">
        <Fill shapes={GRAMPIANS_PARKS} color="#9fe08f" />
      </g>
      <Fill shapes={[BARWON]} color="#f5c2e2" />
      <g filter="url(#ragged-fine)">
        <Fill shapes={BARWON_PARKS} color="#d5b7a5" />
      </g>
      <Fill shapes={[HUME]} color="#f9d4c0" />
      <g clipPath="url(#hume)">
        <g filter="url(#ragged)">
          <Fill shapes={HIGH_COUNTRY} color="#dac69c" />
          <Fill shapes={HIGH_GAPS} color="#f3cfb3" />
          <Fill shapes={HIGH_OLIVE} color="#d0bd6c" opacity={0.8} />
        </g>
      </g>
      <Fill shapes={[GIPPSLAND]} color="#ccf4e8" />
      <g clipPath="url(#gippsland)">
        <g filter="url(#ragged)">
          <Fill shapes={[GIPPS_FOREST]} color="#b1e8cc" />
          <path d={GIPPS_FOREST} fill="none" stroke="#b1e8cc" strokeWidth="6" />
          <Fill shapes={GIPPS_GREEN} color="#a4e8ac" opacity={0.8} />
          <Fill shapes={GIPPS_VALLEYS} color="#c8f4e4" />
          <Fill shapes={GIPPS_WOODS} color="#aee8cc" />
        </g>
      </g>

      <g filter="url(#ragged-fine)">
        <Fill shapes={LAKES} color="#8fbdfa" />
        <Fill shapes={PURPLE_LAKES} color="#ac9fdc" />
        <Fill shapes={GIPPS_LAKES} color="#76c8f2" />
      </g>

      <Stroke shapes={PINK_ROADS} color="#ecb9a8" />
      <Stroke shapes={ORANGE_ROADS} color="#f4b184" />
      <Stroke shapes={GREEN_ROADS} color="#b9cfa0" />
      <Stroke shapes={MAGENTA_ROADS} color="#eba9b4" />
      <Stroke shapes={AQUA_ROADS} color="#a9d9b8" />
      <g filter="url(#ragged-fine)">
        <Stroke shapes={LODDON_LGA} color="#ee8090" opacity={0.8} />
        <Stroke shapes={GRAMPIANS_LGA} color="#7fc0a0" />
        <Stroke shapes={BARWON_LGA} color="#e078c0" />
        <Stroke shapes={HUME_LGA} color="#f39a72" />
      </g>
      <Stroke shapes={MAJOR} color="#e3c98c" width={2} />
      <Stroke shapes={MAJOR_EAST} color="#efaf7c" width={2} />
      <Stroke shapes={MAJOR_GIPPS} color="#b5c793" width={2} />

      {/* Melbourne freeways */}
      <Stroke
        shapes={[
          line([0, 1, "1450,640 1490,580 1540,565"], [1, 1, "0,560 35,560 48,590 40,670 25,720 30,780"]),
          line([1, 1, "-60,590 0,580 25,600 35,640 60,670 100,690 150,690"]),
          line([1, 1, "-20,520 0,580"]),
        ]}
        color="#f8c078"
        width={4}
      />
      <Stroke
        shapes={[
          line([0, 1, "1470,470 1568,470"]),
          line([0, 1, "1500,430 1500,560"]),
          line([1, 1, "10,420 15,550"]),
          line([1, 1, "-40,500 90,510"]),
          line([1, 1, "40,470 50,560 120,600"]),
          line([1, 1, "70,700 180,740"]),
          line([1, 1, "90,690 130,760"]),
        ]}
        color="#f3dcb8"
      />

      {/* Region outlines and state borders */}
      <Stroke shapes={[line(murray)]} color="#a98085" width={2} opacity={0.8} />
      <Stroke shapes={[line(humeNorth)]} color="#b09a94" width={2} opacity={0.8} />
      <Stroke shapes={[line(...loddonGrampians)]} color="#b5b3a5" />
      <Stroke shapes={[line(grampiansBarwon)]} color="#cf96bd" />
      <Stroke shapes={[line(surfCoast)]} color="#e79ad0" />
      <Stroke shapes={[line(humeGipps)]} color="#bfb98c" />
      <g fill="none" stroke="#9a9798" strokeWidth="1.500" strokeDasharray="14 4">
        <path d={line([0, 0, "402,0 400,180"])} />
        <path d={line([0, 0, "390,180 390,1260"], [0, 1, "390,0 390,680"])} />
        <path d={line([1, 1, "882,105 1410,430"])} />
        <path
          strokeDasharray="8 5"
          d={line([1, 0, "1155,660 1170,655 1190,690 1225,718 1240,745 1190,750 1175,780 1165,850 1160,960 1145,992 1105,975 1080,920 1065,850 1072,760 1100,700"])}
        />
      </g>

      {/* Road shields */}
      <g className="font-[Roboto] text-[11px] font-bold" textAnchor="middle">
        {SHIELDS.map(([name, c, r, x, y, bg, fg], i) => {
          const w = name.length * 7 + 8;
          const cx = px(c, x);
          const cy = py(r, y);
          return (
            <g key={i}>
              <rect x={cx - w / 2} y={cy - 7} width={w} height="14" rx="1" fill={bg} />
              <text x={cx} y={cy + 4} fill={fg}>
                {name}
              </text>
            </g>
          );
        })}
      </g>

      {/* Towns */}
      <g fill="#fff" stroke="#444" strokeWidth="1.200">
        {DOTS.map(([c, r, x, y], i) => (
          <circle key={i} cx={px(c, x)} cy={py(r, y)} r="2.200" />
        ))}
        <circle cx={px(0, 1539)} cy={py(1, 572)} r="3.500" stroke="#222" />
        <circle cx={px(1, 1168)} cy={py(0, 732)} r="4" stroke="#222" strokeWidth="1.500" />
        <circle cx={px(1, 1168)} cy={py(0, 732)} r="1.500" fill="#222" stroke="none" />
      </g>
      <g
        className="font-[Roboto] text-[14px]"
        textAnchor="middle"
        fill="#3f3b3c"
        stroke="#fff"
        strokeOpacity="0.5"
        strokeWidth="2"
        paintOrder="stroke"
      >
        {TOWN_NAMES.map(([name, c, r, x, y]) => (
          <text key={name} x={px(c, x)} y={py(r, y)}>
            {name}
          </text>
        ))}
        <text x={px(1, 1168)} y={py(0, 710)} className="text-[16px]" fill="#222">
          Canberra
        </text>
        <text x={px(0, 1539)} y={py(1, 547)} className="text-[18px]" fill="#222">
          Melbourne
        </text>
        <g className="text-[18px] italic" fill="#557a45">
          <text x={px(0, 283)} y={py(0, 930)}>Ngarkat</text>
          <text x={px(1, 920)} y={py(0, 1243)}>Kosciuszko</text>
          <text x={px(1, 920)} y={py(1, 36)}>National Park</text>
          <text x={px(1, 625)} y={py(1, 175)}>Alpine</text>
          <text x={px(1, 625)} y={py(1, 229)}>National Park</text>
          <text x={px(1, 1450)} y={py(0, 30)} textAnchor="start">Mount</text>
          <text x={px(1, 1420)} y={py(0, 83)} textAnchor="start">National</text>
        </g>
        <text x={px(0, 1127)} y={py(1, 240)} textAnchor="start" className="text-[21px] tracking-[0.3em]" fill="#a58480" strokeWidth="1">
          VICTORIA
        </text>
      </g>

      {/* Region names */}
      <g
        className="font-[Inter] text-[22px] font-bold"
        textAnchor="middle"
        fill="#1c1c1e"
        stroke="#fff"
        strokeOpacity="0.55"
        strokeWidth="3"
        paintOrder="stroke"
      >
        {REGION_NAMES.map(([name, x, y, c, r]) => (
          <text key={name} x={px(c, x)} y={py(r, y)}>
            {name}
          </text>
        ))}
      </g>
    </svg>
  );
}

/* ---------- Page sections ---------- */

function Header() {
  return (
    <header className="flex h-[161px] items-center justify-between bg-[#009da8] px-5">
      <a href="#">
        <Logo />
      </a>
      <form className="flex h-[59px] w-[301px] items-center bg-white px-4" onSubmit={(e) => e.preventDefault()}>
        <input
          type="search"
          aria-label="Search"
          placeholder="Search"
          className="min-w-0 flex-1 text-lg text-gray-700 outline-none placeholder:text-[#8d8d8d]"
        />
        <button type="submit" aria-label="Submit search" className="text-[#1a1a1a]">
          <Magnifier className="h-[26px] w-[26px]" />
        </button>
      </form>
    </header>
  );
}

function NavBar() {
  return (
    <nav aria-label="Main" className="h-16 pl-4">
      <ul className="flex h-full items-center gap-[35px] whitespace-nowrap text-[19px] text-[#666]">
        {NAV.map((item) => (
          <li key={item.label}>
            <a href="#" className="flex items-center gap-[9px]">
              {item.label}
              {item.menu && <Chevron />}
            </a>
          </li>
        ))}
      </ul>
    </nav>
  );
}

function Breadcrumb() {
  return (
    <nav aria-label="Breadcrumb" className="flex h-[99px] items-center bg-[#d8dad7] pb-1 text-2xl text-[#6d6d6d]">
      <ol className="flex items-center">
        <li>
          <a href="#" className="text-[#2f6cb0]">Home</a>
        </li>
        <li aria-hidden="true" className="px-3 text-[#c9cbcc]">/</li>
        <li>Victoria&apos;s Regions</li>
      </ol>
    </nav>
  );
}

function PostcodeSearch() {
  return (
    <section className="relative overflow-hidden bg-[#54565b] px-6 pt-7 pb-[23px] text-center">
      <svg
        viewBox="0 0 158 150"
        className="absolute top-0 right-0 h-full"
        fill="none"
        stroke="#6a6c70"
        strokeWidth="1.500"
        aria-hidden="true"
      >
        <path d="M68 0 2 150M62 19H129M27 93H158M137 0 129 19 94 93 68 150M121 0 129 19 158 85M27 93 53 150M94 93 121 150M158 96 135 150M148 93 158 125" />
      </svg>
      <label htmlFor="postcode" className="relative block text-xl leading-6 text-white">
        FIND OUT WHICH REGION YOU BELONG TO
      </label>
      <form
        className="relative mx-auto mt-4 flex h-[59px] max-w-[788px] items-center rounded bg-white px-4"
        onSubmit={(e) => e.preventDefault()}
      >
        <input
          id="postcode"
          placeholder="Search by postcode"
          className="min-w-0 flex-1 text-lg text-gray-700 outline-none placeholder:text-[#8d8d8d]"
        />
        <button type="submit" aria-label="Find region" className="text-[#333]">
          <Magnifier className="h-[18px] w-[18px]" />
        </button>
      </form>
    </section>
  );
}

function Filters() {
  return (
    <aside className="w-1/3 shrink-0 bg-[#eaeaea] px-8 pt-[65px]">
      <p className="text-xl leading-[27px]">Find the right council by narrowing down results with the filters below</p>
      <fieldset className="mt-4">
        <legend className="w-full border-b border-[#e2e2e2] pb-1.5 text-[28px] leading-8">Region</legend>
        <ul className="mt-5">
          {FILTERS.map((name) => (
            <li key={name} className="h-[39px]">
              <label className="flex h-full items-center gap-1.5 text-2xl">
                <span className="grid shrink-0">
                  <input
                    type="checkbox"
                    defaultChecked
                    className="peer col-start-1 row-start-1 h-[18px] w-[18px] appearance-none rounded-[4px] border border-gray-400 bg-white checked:border-[#3b8fe8] checked:bg-[#3f95ee]"
                  />
                  <svg
                    viewBox="0 0 18 18"
                    className="pointer-events-none invisible col-start-1 row-start-1 h-[18px] w-[18px] peer-checked:visible"
                    fill="none"
                    stroke="#fff"
                    strokeWidth="1.800"
                    strokeLinecap="round"
                    aria-hidden="true"
                  >
                    <path d="M4.500 9.500 7.500 12.800 13 4.500" />
                  </svg>
                </span>
                {name}
              </label>
            </li>
          ))}
        </ul>
      </fieldset>
    </aside>
  );
}

function CouncilLink({ council }: { council: Council }) {
  if (typeof council === "string") {
    return (
      <a href="#" className="border-b border-[#e2e2e2] pb-px">
        {council}
      </a>
    );
  }
  return (
    <a href="#" className="border-b border-[#e2e2e2] pb-px">
      <Star />
      {council.city} <span className="text-[#5f5f5f]">regional city</span>
    </a>
  );
}

function CouncilList() {
  return (
    <div id="regions" className="grid flex-1 grid-cols-3 content-start pt-[90px] pr-8 pb-[35px] pl-[31px] text-2xl leading-8">
      {COUNCILS.map((group) => (
        <section key={group.letter} className="mb-7 flex">
          <h3 className="w-[39px] shrink-0 font-medium">{group.letter}</h3>
          <ul className="min-w-0 flex-1 pr-5">
            {group.items.map((item, i) => (
              <li key={i} className="mb-[9px]">
                <CouncilLink council={item} />
              </li>
            ))}
          </ul>
        </section>
      ))}
    </div>
  );
}

function ShareBar() {
  return (
    <footer className="flex items-center justify-center gap-6 pt-[52px] pb-24 text-2xl">
      <span>Share this page:</span>
      <button type="button" className="flex h-[41px] w-[116px] items-center justify-center gap-2 bg-[#20b2ea] text-[17px] font-light text-white">
        <svg viewBox="0 0 24 20" className="h-5 w-6" fill="currentColor" aria-hidden="true">
          <path d="M23.600 2.400a9.600 9.600 0 0 1-2.800.800A4.800 4.800 0 0 0 22.900.500a9.600 9.600 0 0 1-3.100 1.200A4.850 4.850 0 0 0 11.500 6.100 13.700 13.700 0 0 1 1.600 1a4.850 4.850 0 0 0 1.500 6.500 4.800 4.800 0 0 1-2.200-.6 4.850 4.850 0 0 0 3.900 4.800 4.900 4.900 0 0 1-2.200.1 4.850 4.850 0 0 0 4.500 3.400A9.700 9.700 0 0 1 0 17.200a13.700 13.700 0 0 0 21.100-12.200 9.700 9.700 0 0 0 2.500-2.600Z" />
        </svg>
        TWEET
      </button>
      <button type="button" className="flex h-[41px] w-[116px] items-center justify-center gap-3.5 bg-[#435d96] text-[17px] font-light text-white">
        <svg viewBox="0 0 13 23" className="h-[23px] w-[13px]" fill="currentColor" aria-hidden="true">
          <path d="M3.500 23V12.700H0V8.800h3.500V5.700C3.500 2.200 5.600 0 9 0c1.600 0 3 .1 3.500.2v3.600h-2.300c-1.900 0-2.300.9-2.300 2.200v2.800h4.300l-.6 3.900H7.900V23Z" />
        </svg>
        SHARE
      </button>
    </footer>
  );
}

const GOOGLE = [
  ["G", "#4885ed"],
  ["o", "#db3236"],
  ["o", "#f4b400"],
  ["g", "#4885ed"],
  ["l", "#3cba54"],
  ["e", "#db3236"],
];

export default function App() {
  return (
    <div className="min-h-screen bg-[#fefefe] font-[Inter,'Liberation_Sans',sans-serif] text-[#1d1d1f]">
      <Header />
      <NavBar />
      <Breadcrumb />
      <div className="border-r-2 border-[#dcdcde]">
        <main>
          <section className="px-6 pt-[52px] pb-[33px] text-center">
            <h1 className="text-[44px] leading-[48px]">Victoria&apos;s Regions</h1>
            <p className="mt-[25px] text-2xl leading-8 text-[#2f2f33]">
              All 48 regional and rural council areas across the state are covered within the five regions and ten
              regional cities in Victoria covering
            </p>
            <a href="#regions" className="mt-3.5 inline-block text-2xl leading-8 text-[#2b5d8c]">
              Skip to region listing
            </a>
          </section>

          <div className="relative">
            <RegionMap />
            <a
              href="#"
              aria-label="Google"
              className="absolute bottom-0 left-2 text-[25px] leading-9 font-medium [text-shadow:0_0_2px_#fff,0_0_2px_#fff,0_0_3px_#fff]"
            >
              {GOOGLE.map(([ch, color], i) => (
                <span key={i} style={{ color }}>
                  {ch}
                </span>
              ))}
            </a>
            <div className="absolute right-0 bottom-0 flex h-[18px] items-center divide-x divide-[#b9cdea] bg-[#dbe8fb] font-[Roboto,sans-serif] text-[13px] text-[#333]">
              {["Map data ©2017 Google", "Terms of Use", "Report a map error"].map((t, i) => (
                <Fragment key={t}>
                  {i === 0 ? <span className="px-[7px]">{t}</span> : <a href="#" className="px-[7px]">{t}</a>}
                </Fragment>
              ))}
            </div>
          </div>

          <PostcodeSearch />

          <div className="flex">
            <Filters />
            <CouncilList />
          </div>
        </main>
        <ShareBar />
      </div>
    </div>
  );
}
